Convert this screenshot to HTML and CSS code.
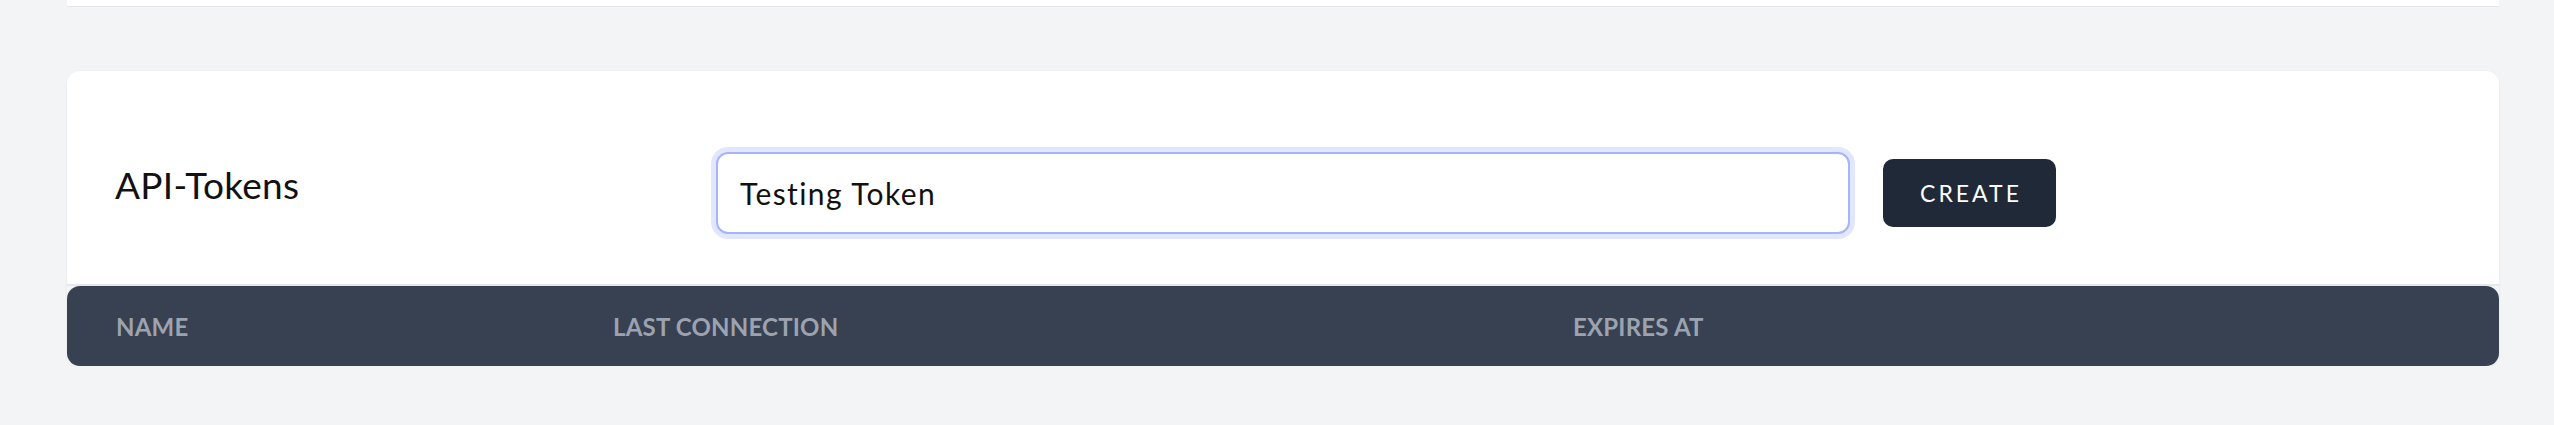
FILE: index.html
```html
<!DOCTYPE html>
<html lang="en">
<head>
<meta charset="utf-8">
<title>API-Tokens</title>
<link rel="stylesheet" href="styles.css">
</head>
<body>
<div class="page">
  <div class="top-panel"></div>
  <section class="card">
    <div class="form-row">
      <h2 class="title">API-Tokens</h2>
      <input class="token-input" type="text" value="Testing Token">
      <button class="create-btn" type="button">CREATE</button>
    </div>
    <div class="table-head">
      <div class="th">NAME</div>
      <div class="th">LAST CONNECTION</div>
      <div class="th">EXPIRES AT</div>
    </div>
  </section>
</div>
</body>
</html>
```
FILE: styles.css
```css
html, body {
  margin: 0;
  padding: 0;
  background: #f3f4f6;
}
body {
  font-family: "Lato", "Noto Sans", sans-serif;
  color: #111111;
}
.page {
  padding: 0 55px 0 67px;
}
.top-panel {
  height: 6px;
  background: #ffffff;
  border-bottom: 1.5px solid #e5e7eb;
}
.card {
  margin-top: 64px;
  box-shadow: 0 1px 3px rgba(0, 0, 0, 0.06);
  border-radius: 13px;
}
.form-row {
  display: flex;
  align-items: center;
  background: #ffffff;
  border-radius: 13px 13px 0 0;
  padding: 81px 0 50px 0;
  border-bottom: 2px solid #e5e7eb;
}
.title {
  box-sizing: border-box;
  width: 649px;
  margin: 0;
  padding-left: 48px;
  font-size: 37px;
  font-weight: 400;
  letter-spacing: 0.3px;
  line-height: 1;
  align-self: flex-start;
  margin-top: 14px;
  color: #111111;
}
.token-input {
  box-sizing: border-box;
  width: 1134px;
  height: 82px;
  margin: 0;
  padding: 0 22px;
  border: 2px solid #a5b4fc;
  border-radius: 12px;
  box-shadow: 0 0 0 5px #e0e7ff;
  font-family: inherit;
  font-size: 30px;
  letter-spacing: 1.4px;
  color: #111111;
  background: #ffffff;
  outline: none;
}
.create-btn {
  box-sizing: border-box;
  margin-left: 33px;
  width: 173px;
  height: 68px;
  border: 0;
  border-radius: 10px;
  background: #1f2937;
  color: #ffffff;
  font-family: inherit;
  font-size: 23px;
  font-weight: 400;
  letter-spacing: 3px;
  padding: 0 0 0 3px;
}
.table-head {
  display: grid;
  grid-template-columns: 497px 960px 1fr;
  align-items: center;
  height: 80px;
  background: #374151;
  border-radius: 13px;
}
.th {
  padding-left: 49px;
  font-size: 24px;
  font-weight: 700;
  letter-spacing: 0.2px;
  color: #9ca3af;
}
```
